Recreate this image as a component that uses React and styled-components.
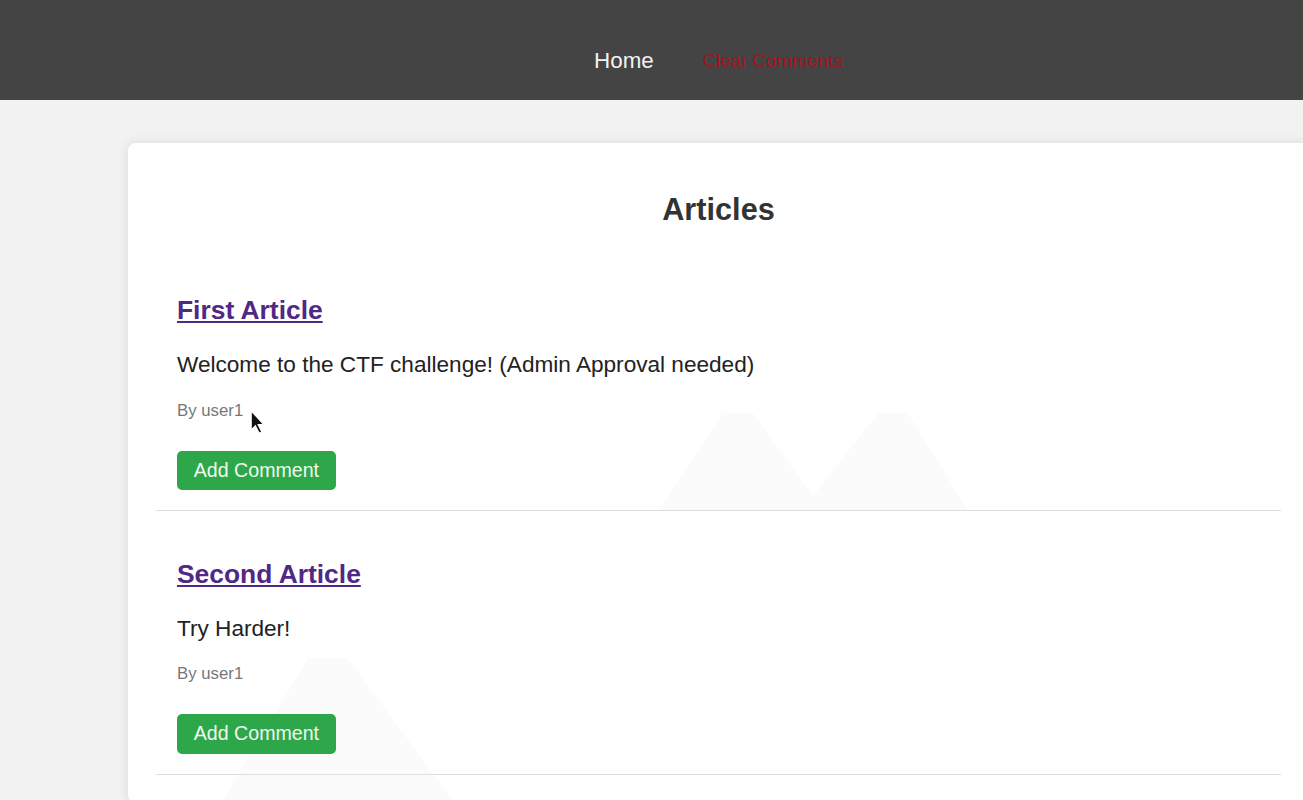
import React from "react";
import styled, { createGlobalStyle } from "styled-components";

const GlobalStyle = createGlobalStyle`
  html, body {
    margin: 0;
    padding: 0;
    background: #f2f2f2;
    overflow: hidden;
  }
  body {
    font-family: "Liberation Sans", Arial, sans-serif;
    color: #333;
  }
`;

const Page = styled.div`
  width: 1437px;
  min-height: 800px;
  background: #f2f2f2;
  position: relative;
`;

const Header = styled.header`
  height: 100px;
  background: #444;
  display: flex;
  justify-content: center;
  align-items: center;
  padding-top: 22px;
  box-sizing: border-box;
`;

const Nav = styled.nav`
  display: flex;
  align-items: center;
  gap: 49px;
`;

const NavLink = styled.a`
  font-size: ${(p) => (p.$danger ? "18.7px" : "22.4px")};
  color: ${(p) => (p.$danger ? "#a3131f" : "#f2f2f2")};
  text-decoration: none;
  cursor: pointer;
`;

const Container = styled.main`
  margin: 43px 128px 0;
  background: #fff;
  border-radius: 8px;
  box-shadow: 0 0 12px rgba(0, 0, 0, 0.1);
  padding: 28px;
  position: relative;
  overflow: hidden;
`;

const Title = styled.h2`
  font-size: 30.7px;
  font-weight: bold;
  text-align: center;
  color: #333;
  margin: 21px 0 20px;
  position: relative;
`;

const Article = styled.article`
  padding: 21px 21px 20px;
  border-bottom: 1px solid #ddd;
  position: relative;
`;

const ArticleTitle = styled.h3`
  font-size: 26.4px;
  font-weight: bold;
  margin: 26.2px 0;
  a {
    color: #502886;
    text-decoration: underline;
  }
`;

const Body = styled.p`
  font-size: 22.6px;
  margin: 22.4px 0;
  color: #222;
`;

const Author = styled.p`
  font-size: 16.8px;
  color: #777;
  margin: 16.8px 0 0;
`;

const Actions = styled.div`
  margin-top: 30px;
  display: flex;
`;

const Button = styled.button`
  background: #2ea74a;
  color: #eefaee;
  border: none;
  border-radius: 5px;
  font-family: "Liberation Sans", Arial, sans-serif;
  font-size: 19.6px;
  padding: 8.3px 16.8px;
  cursor: pointer;
`;

const Mountains = styled.svg`
  position: absolute;
  pointer-events: none;
`;

const Cursor = styled.svg`
  position: absolute;
  left: 250px;
  top: 410px;
  pointer-events: none;
`;

const articles = [
  { title: "First Article", body: "Welcome to the CTF challenge! (Admin Approval needed)", author: "user1" },
  { title: "Second Article", body: "Try Harder!", author: "user1" },
];

export default function App() {
  return (
    <Page>
      <GlobalStyle />
      <Header>
        <Nav>
          <NavLink>Home</NavLink>
          <NavLink $danger>Clear Comments</NavLink>
        </Nav>
      </Header>
      <Container>
        <Mountains width="320" height="110" viewBox="0 0 320 110" style={{ left: 530, top: 258 }}>
          <polygon points="0,110 65,12 95,12 155,95 220,12 250,12 310,110" fill="#fbfbfb" />
        </Mountains>
        <Mountains width="240" height="160" viewBox="0 0 240 160" style={{ left: 90, top: 505 }}>
          <polygon points="0,160 90,10 130,10 240,160" fill="#fbfbfb" />
        </Mountains>
        <Title>Articles</Title>
        {articles.map((a) => (
          <Article key={a.title}>
            <ArticleTitle>
              <a href="#">{a.title}</a>
            </ArticleTitle>
            <Body>{a.body}</Body>
            <Author>By {a.author}</Author>
            <Actions>
              <Button>Add Comment</Button>
            </Actions>
          </Article>
        ))}
      </Container>
      <Cursor width="15" height="25" viewBox="0 0 14 24">
        <path d="M1 1 L1 19 L5 15 L8.5 22 L11 21 L7.5 14 L13 14 Z" fill="#111" stroke="#fff" strokeWidth="1" />
      </Cursor>
    </Page>
  );
}
